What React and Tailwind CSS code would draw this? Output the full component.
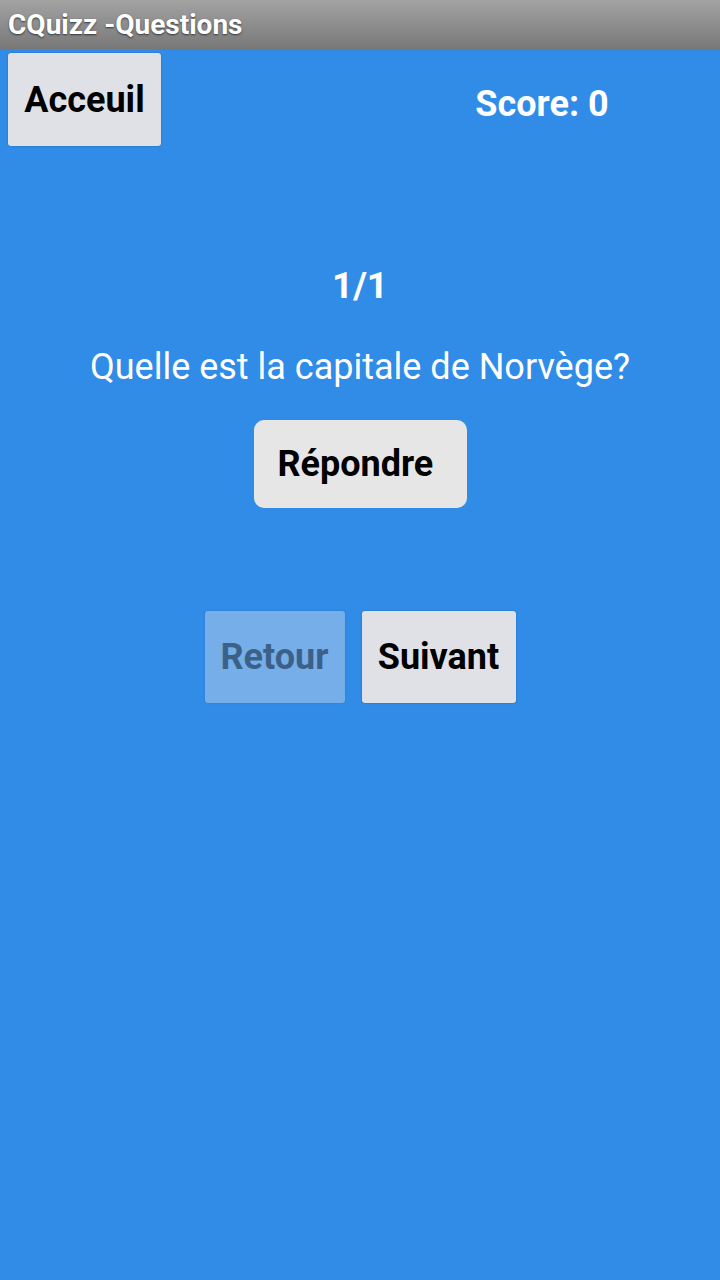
export default function App() {
  return (
    <div className="flex h-[1280px] w-[720px] flex-col bg-[#318ce7] font-['Roboto',sans-serif]">
      <div className="flex h-[50px] items-center bg-gradient-to-b from-[#a3a3a3] to-[#777777] px-2">
        <span className="text-[28px] font-bold leading-none text-white [text-shadow:0_1px_2px_rgba(0,0,0,0.6)]">
          CQuizz -Questions
        </span>
      </div>

      <div className="flex">
        <div className="w-1/2">
          <button className="ml-2 mt-[3px] flex h-[93px] w-[153px] items-center justify-center rounded-[3px] bg-[#dfe1e6] text-[36px] font-bold text-black shadow-[0_0_2px_rgba(0,0,0,0.25)]">
            Acceuil
          </button>
        </div>
        <div className="flex w-1/2 items-center justify-center">
          <span className="mt-[12px] pl-[4px] text-[36px] font-bold text-white">Score: 0</span>
        </div>
      </div>

      <div className="mt-[120px] flex flex-col items-center">
        <span className="text-[37px] font-bold leading-[40px] text-white">1/1</span>
        <span className="mt-[41px] text-[36px] leading-[40px] text-white">
          Quelle est la capitale de Norvège?
        </span>
        <button className="mt-[33px] flex h-[88px] w-[213px] items-center rounded-[10px] bg-[#e6e6e6] pl-6 text-[36px] font-bold text-black">
          Répondre
        </button>
        <div className="mt-[103px] flex gap-[17px]">
          <button className="flex h-[92px] w-[140px] items-center justify-center rounded-[3px] bg-[#76aee9] text-[36px] font-bold text-[#3c6189] shadow-[0_0_2px_rgba(0,0,0,0.15)]">
            Retour
          </button>
          <button className="flex h-[92px] w-[154px] items-center justify-center rounded-[3px] bg-[#dfe1e6] text-[36px] font-bold text-black shadow-[0_0_2px_rgba(0,0,0,0.25)]">
            Suivant
          </button>
        </div>
      </div>
    </div>
  );
}
